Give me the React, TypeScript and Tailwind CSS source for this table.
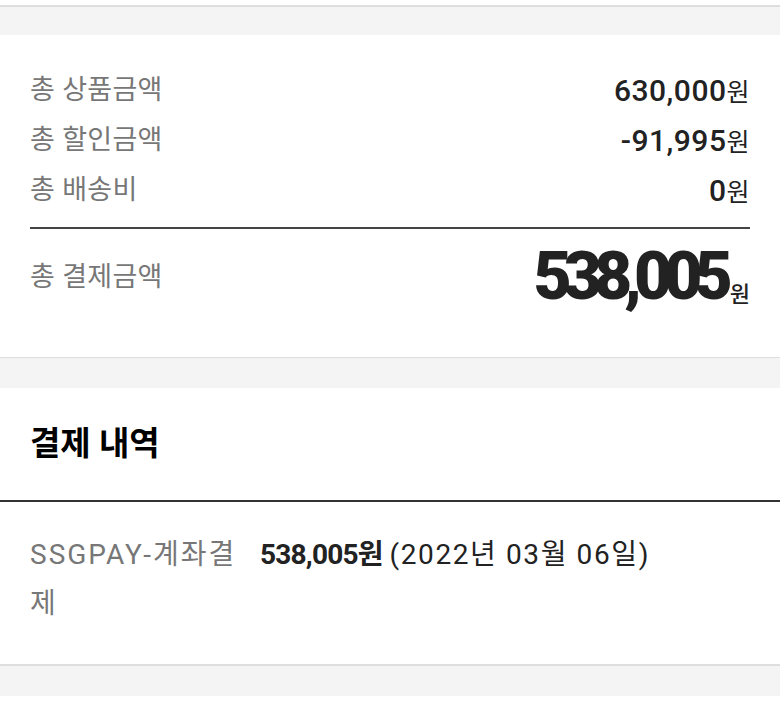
const FONT = "font-['Roboto','Noto_Sans_CJK_KR',sans-serif]";

function SummaryRow({ label, value }: { label: string; value: string }) {
  return (
    <div className="flex items-center justify-between h-[50px]">
      <span className="text-[27px] text-[#777] tracking-[0.3px]">{label}</span>
      <span className="text-[30px] font-medium text-[#222] tracking-[0.5px]">
        {value}
        <span className="text-[25px] font-normal">원</span>
      </span>
    </div>
  );
}

export default function App() {
  return (
    <div className={`w-[780px] h-[707px] overflow-hidden bg-white ${FONT}`}>
      <div className="h-[5px] bg-white" />
      <div className="h-[30px] bg-[#f4f4f4] border-t-2 border-[#dedede]" />

      {/* 금액 요약 */}
      <div className="bg-white px-[30px] pt-[30px] h-[323px] border-b border-[#dedede]">
        <SummaryRow label="총 상품금액" value="630,000" />
        <SummaryRow label="총 할인금액" value="-91,995" />
        <SummaryRow label="총 배송비" value="0" />
        <div className="h-[2px] bg-[#444] mt-[12px]" />
        <div className="flex items-center justify-between h-[96px]">
          <span className="text-[27px] text-[#777] tracking-[0.3px]">총 결제금액</span>
          <span className="flex items-end text-[#222]">
            <span className="text-[66px] font-black tracking-[-8px] leading-none">538,005</span>
            <span className="text-[22px] font-medium leading-none mb-[4px] ml-[5px]">원</span>
          </span>
        </div>
      </div>

      <div className="h-[30px] bg-[#f4f4f4]" />

      {/* 결제 내역 */}
      <div className="bg-white h-[114px] px-[30px] flex items-center border-b-2 border-[#333]">
        <h2 className="text-[33px] font-bold text-black">결제 내역</h2>
      </div>
      <div className="bg-white px-[30px] pt-[28px] h-[164px] border-b-2 border-[#dedede]">
        <div className="flex items-start text-[28px] leading-[49px]">
          <span className="w-[230px] shrink-0 text-[#777] whitespace-nowrap tracking-[2px]">
            SSGPAY-계좌결
            <br />제
          </span>
          <span className="text-[#222] whitespace-nowrap">
            <span className="font-bold tracking-[-0.8px]">538,005원</span>{' '}
            <span className="tracking-[1.6px]">(2022년 03월 06일)</span>
          </span>
        </div>
      </div>
      <div className="h-[30px] bg-[#f4f4f4]" />
    </div>
  );
}
